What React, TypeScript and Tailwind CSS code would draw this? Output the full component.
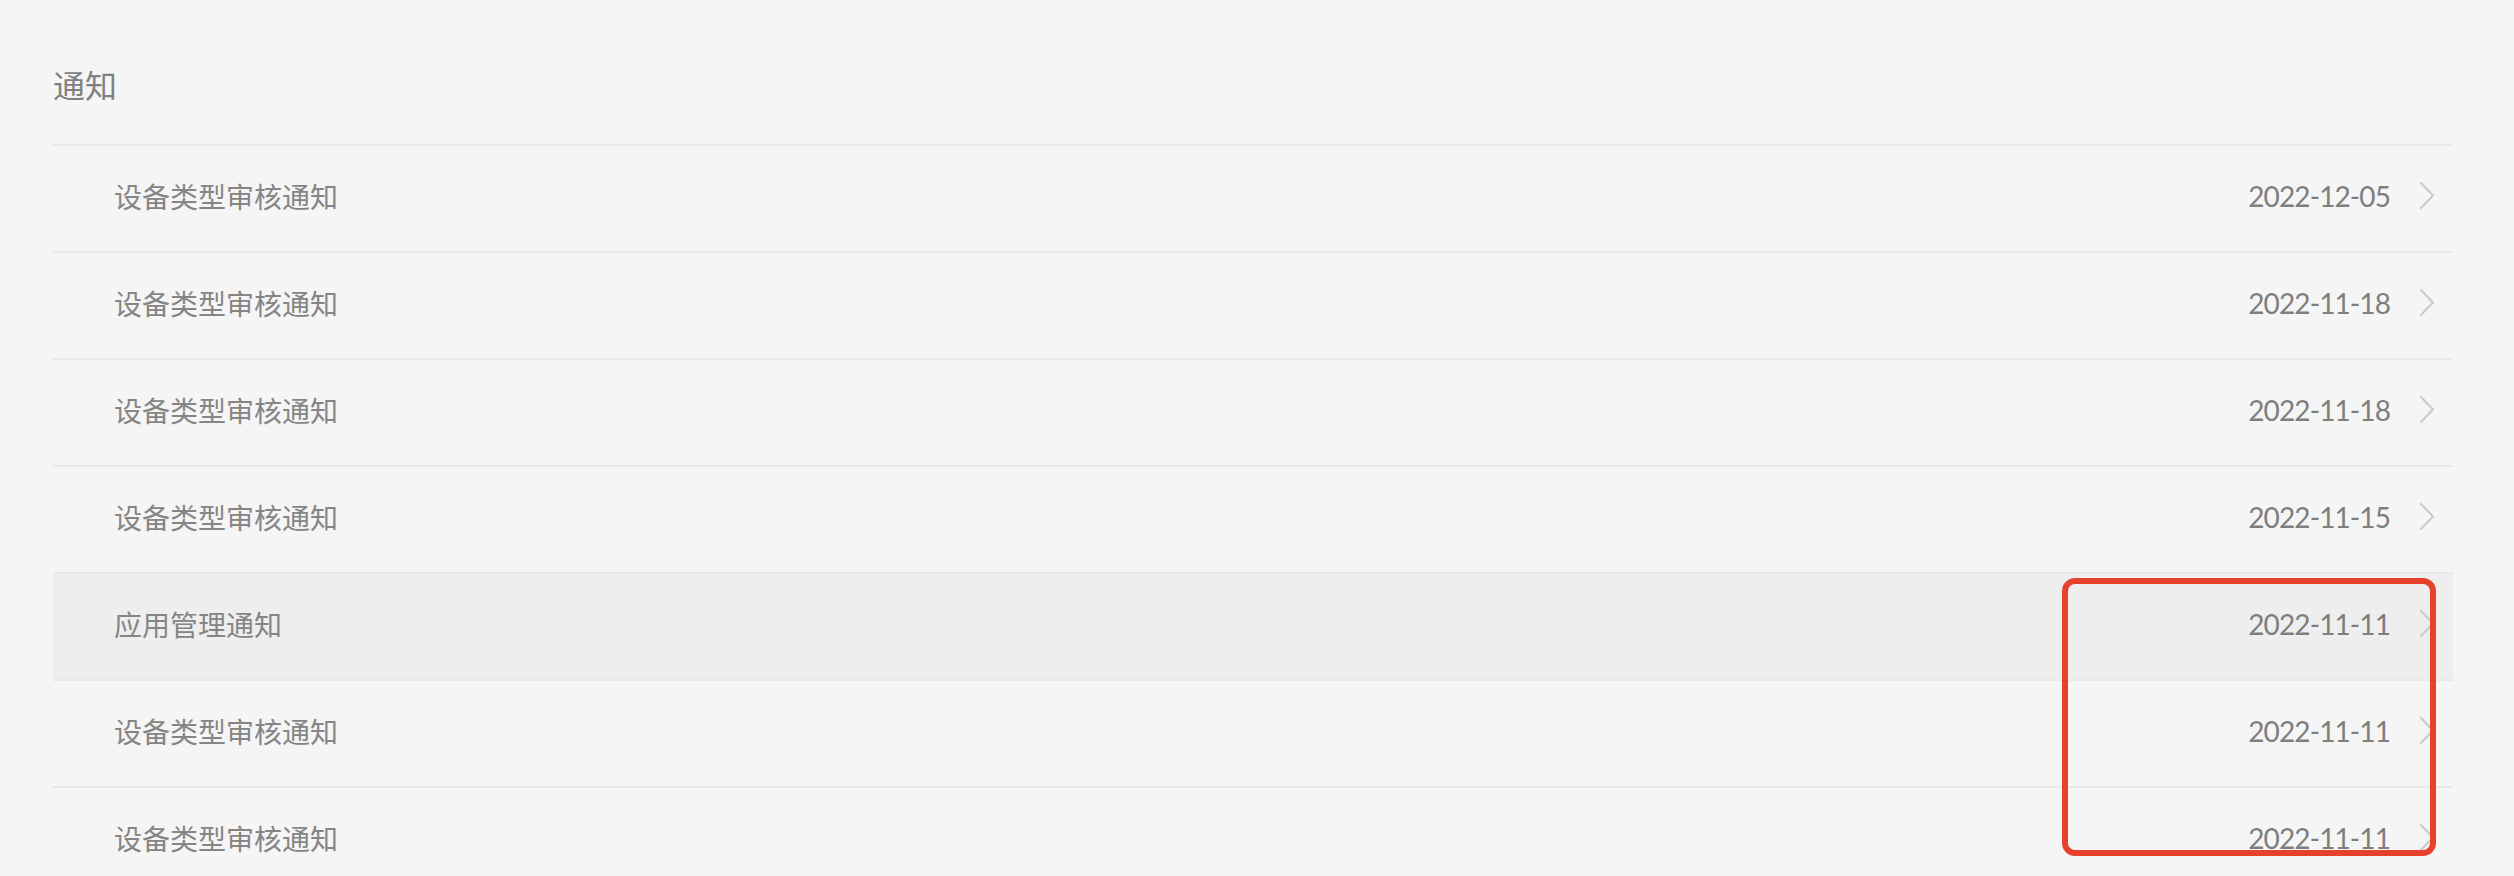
const items = [
  { title: "设备类型审核通知", date: "2022-12-05" },
  { title: "设备类型审核通知", date: "2022-11-18" },
  { title: "设备类型审核通知", date: "2022-11-18" },
  { title: "设备类型审核通知", date: "2022-11-15" },
  { title: "应用管理通知", date: "2022-11-11", active: true },
  { title: "设备类型审核通知", date: "2022-11-11" },
  { title: "设备类型审核通知", date: "2022-11-11" },
];

function Chevron() {
  return (
    <svg width="16" height="28" viewBox="0 0 16 28" fill="none" stroke="#c9c9c9" strokeWidth="2" strokeLinecap="square">
      <path d="M2 2l12 12.5L2 27" />
    </svg>
  );
}

export default function App() {
  return (
    <div className="relative h-[876px] overflow-hidden bg-[#f5f5f5] pl-[53px] pr-[61px] font-['Noto_Sans_CJK_SC',sans-serif]">
      <h1 className="pt-[68px] pb-[44px] text-[32px] leading-[32px] font-normal text-[#808080]">通知</h1>

      <ul>
        {items.map((it, i) => (
          <li
            key={i}
            className={`flex h-[107px] items-center border-t-2 border-[#e8e8e8] pb-[6px] pl-[61px] pr-[18px] ${
              it.active ? "bg-[#eeeeee]" : ""
            }`}
          >
            <span className="flex-1 text-[28px] leading-none text-[#858585]">{it.title}</span>
            <span className="font-['Lato',sans-serif] text-[28px] leading-none tracking-[-0.9px] text-[#7e7e7e]">
              {it.date}
            </span>
            <span className="ml-[29px] -mt-[2px] flex">
              <Chevron />
            </span>
          </li>
        ))}
      </ul>

      {/* annotation */}
      <div className="absolute left-[2062px] top-[578px] h-[278px] w-[374px] rounded-[13px] border-[6px] border-[#e8412b]" />
    </div>
  );
}
